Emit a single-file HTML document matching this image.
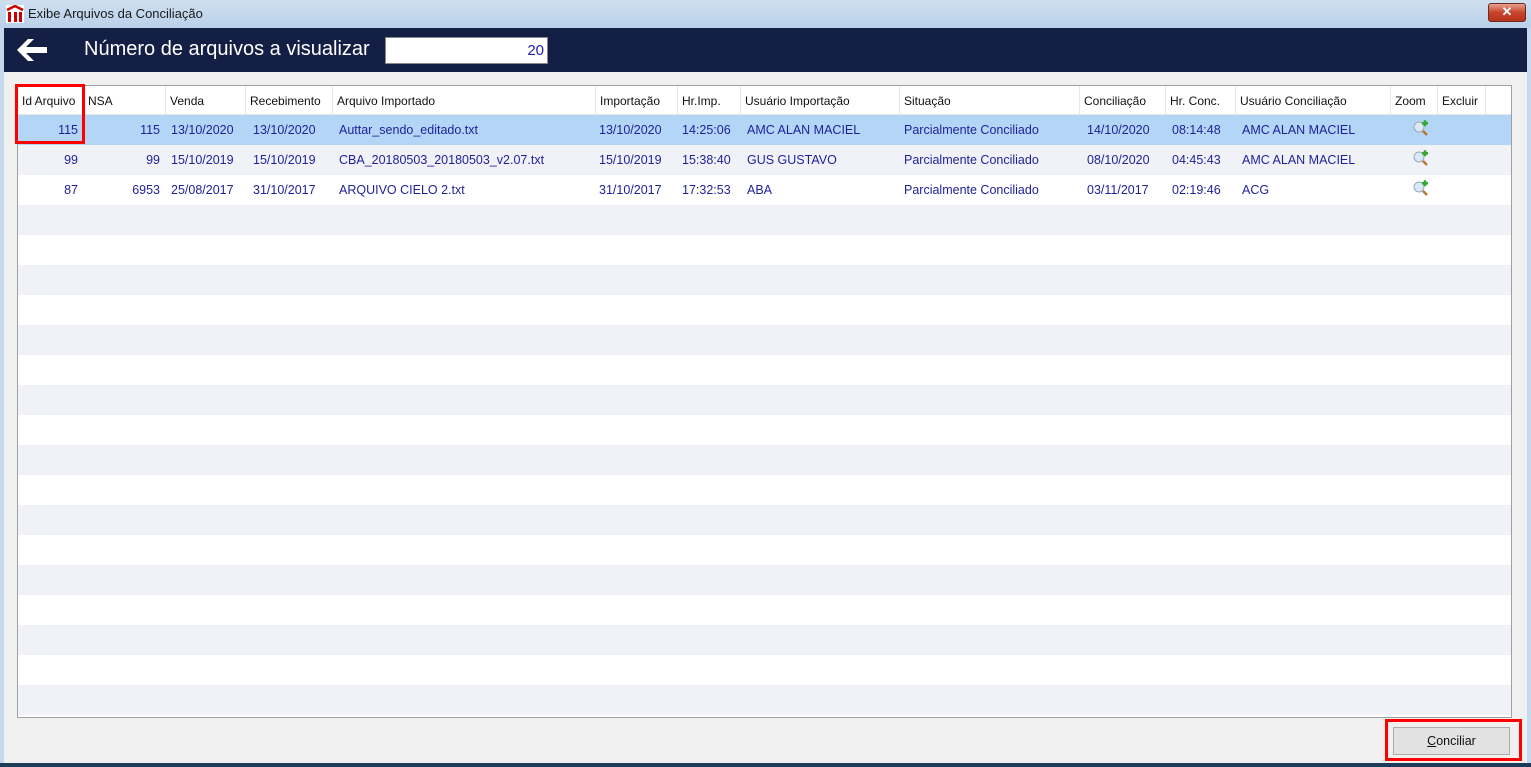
<!DOCTYPE html>
<html><head><meta charset="utf-8"><style>
*{margin:0;padding:0;box-sizing:border-box}
body{width:1531px;height:767px;overflow:hidden;background:#f0f0f0;font-family:"Liberation Sans",sans-serif;position:relative}
.tb{position:absolute;left:0;top:0;width:1531px;height:28px;background:linear-gradient(#cfdff0,#b9d1ea);}
.tb .t{position:absolute;left:28px;top:6px;font-size:13px;color:#1a1a1a}
.close{position:absolute;left:1488px;top:3px;width:38px;height:19px;border-radius:3px;background:linear-gradient(#e8a090,#c7442c 50%,#b8321c);border:1px solid #6b2a20;color:#fff;font-size:13px;font-weight:bold;text-align:center;line-height:16px}
.band{position:absolute;left:4px;top:28px;width:1523px;height:44px;background:#141f45}
.band .lbl{position:absolute;left:80px;top:10px;font-size:20px;color:#fff}
.inp{position:absolute;left:381px;top:9px;width:163px;height:27px;background:#fff;border:1px solid #888;color:#2222aa;font-size:15px;text-align:right;padding:4px 3px 0 0}
.side{position:absolute;top:28px;width:4px;height:739px;background:#c6d8ec}
.grid{position:absolute;left:17px;top:85px;width:1495px;height:633px;background:#fff;border:1px solid #a0a0a0;overflow:hidden}
.hd{position:absolute;left:0;top:0;height:29px;width:1493px;background:#fff;border-bottom:1px solid #e4e4e4}
.hd span{position:absolute;font-size:12px;color:#111;height:29px;top:0;padding-top:8px;border-right:1px solid #e6e6e6;padding-left:4px;white-space:nowrap}
.row{position:absolute;left:0;width:1493px;height:30px;font-size:12.5px;color:#1f1f9a}
.row span{position:absolute;top:8px;white-space:nowrap}
.r{text-align:right}
.g{background:#f1f2f7}
.sel{background:#b3d6f6}
.btn{position:absolute;left:1393px;top:727px;width:117px;height:28px;background:#e2e2e2;border:1px solid #adadad;font-size:12.5px;text-align:center;line-height:26px;color:#111}
.red{position:absolute;border:3px solid #f00}
.zi{position:absolute;left:1395px;top:5px;width:16px;height:16px}
</style></head><body>
<div class="tb">
<svg style="position:absolute;left:6px;top:5px" width="18" height="18"><rect x="0" y="0" width="18" height="18" fill="#fff"/><path d="M1 5 L9 1 L17 5" stroke="#c00" stroke-width="2.5" fill="none"/><rect x="2" y="7" width="3" height="10" fill="#c00"/><rect x="8" y="7" width="3" height="10" fill="#c00"/><rect x="13" y="7" width="3" height="10" fill="#c00"/></svg>
<div class="t">Exibe Arquivos da Conciliação</div>
<div class="close">✕</div>
</div>
<div class="side" style="left:0"></div><div class="side" style="left:1527px"></div>
<div style="position:absolute;left:0;top:763px;width:1531px;height:4px;background:#1c3c5a"></div>
<div class="band">
<svg style="position:absolute;left:10px;top:8px" width="36" height="28"><path d="M3 14 L14 3 L20 3 L12 11 L33 11 L33 17 L12 17 L20 25 L14 25 Z" fill="#fff"/></svg>
<div class="lbl">Número de arquivos a visualizar</div>
<div class="inp">20</div>
</div>
<div class="grid">
<div class="hd">
<span style="left:0;width:66px">Id Arquivo</span>
<span style="left:66px;width:82px">NSA</span>
<span style="left:148px;width:80px">Venda</span>
<span style="left:228px;width:87px">Recebimento</span>
<span style="left:315px;width:263px">Arquivo Importado</span>
<span style="left:578px;width:82px">Importação</span>
<span style="left:660px;width:63px">Hr.Imp.</span>
<span style="left:723px;width:159px">Usuário Importação</span>
<span style="left:882px;width:180px">Situação</span>
<span style="left:1062px;width:86px">Conciliação</span>
<span style="left:1148px;width:70px">Hr. Conc.</span>
<span style="left:1218px;width:155px">Usuário Conciliação</span>
<span style="left:1373px;width:47px">Zoom</span>
<span style="left:1420px;width:48px">Excluir</span>
</div>
<div class="row sel" style="top:29px"><span class="r" style="left:0;width:60px">115</span><span class="r" style="left:66px;width:76px">115</span><span style="left:153px">13/10/2020</span><span style="left:235px">13/10/2020</span><span style="left:321px">Auttar_sendo_editado.txt</span><span style="left:581px">13/10/2020</span><span style="left:664px">14:25:06</span><span style="left:729px">AMC ALAN MACIEL</span><span style="left:886px">Parcialmente Conciliado</span><span style="left:1069px">14/10/2020</span><span style="left:1154px">08:14:48</span><span style="left:1224px">AMC ALAN MACIEL</span><svg class="zi" viewBox="0 0 16 16"><circle cx="6" cy="7" r="5" fill="#dbe8f5" stroke="#9ab"/><rect x="9" y="2" width="6" height="2.6" fill="#3a3"/><rect x="10.7" y="0.2" width="2.6" height="6" fill="#3a3"/><path d="M10 11 L14 15" stroke="#b8742a" stroke-width="2.5"/></svg></div>
<div class="row g" style="top:59px"><span class="r" style="left:0;width:60px">99</span><span class="r" style="left:66px;width:76px">99</span><span style="left:153px">15/10/2019</span><span style="left:235px">15/10/2019</span><span style="left:321px">CBA_20180503_20180503_v2.07.txt</span><span style="left:581px">15/10/2019</span><span style="left:664px">15:38:40</span><span style="left:729px">GUS GUSTAVO</span><span style="left:886px">Parcialmente Conciliado</span><span style="left:1069px">08/10/2020</span><span style="left:1154px">04:45:43</span><span style="left:1224px">AMC ALAN MACIEL</span><svg class="zi" viewBox="0 0 16 16"><circle cx="6" cy="7" r="5" fill="#dbe8f5" stroke="#9ab"/><rect x="9" y="2" width="6" height="2.6" fill="#3a3"/><rect x="10.7" y="0.2" width="2.6" height="6" fill="#3a3"/><path d="M10 11 L14 15" stroke="#b8742a" stroke-width="2.5"/></svg></div>
<div class="row" style="top:89px"><span class="r" style="left:0;width:60px">87</span><span class="r" style="left:66px;width:76px">6953</span><span style="left:153px">25/08/2017</span><span style="left:235px">31/10/2017</span><span style="left:321px">ARQUIVO CIELO 2.txt</span><span style="left:581px">31/10/2017</span><span style="left:664px">17:32:53</span><span style="left:729px">ABA</span><span style="left:886px">Parcialmente Conciliado</span><span style="left:1069px">03/11/2017</span><span style="left:1154px">02:19:46</span><span style="left:1224px">ACG</span><svg class="zi" viewBox="0 0 16 16"><circle cx="6" cy="7" r="5" fill="#dbe8f5" stroke="#9ab"/><rect x="9" y="2" width="6" height="2.6" fill="#3a3"/><rect x="10.7" y="0.2" width="2.6" height="6" fill="#3a3"/><path d="M10 11 L14 15" stroke="#b8742a" stroke-width="2.5"/></svg></div>
<div class="row g" style="top:119px"></div>
<div class="row g" style="top:179px"></div>
<div class="row g" style="top:239px"></div>
<div class="row g" style="top:299px"></div>
<div class="row g" style="top:359px"></div>
<div class="row g" style="top:419px"></div>
<div class="row g" style="top:479px"></div>
<div class="row g" style="top:539px"></div>
<div class="row g" style="top:599px"></div>
</div>
<div class="red" style="left:15px;top:84px;width:70px;height:60px"></div>
<div class="btn"><u>C</u>onciliar</div>
<div class="red" style="left:1385px;top:719px;width:137px;height:42px"></div>
</body></html>
